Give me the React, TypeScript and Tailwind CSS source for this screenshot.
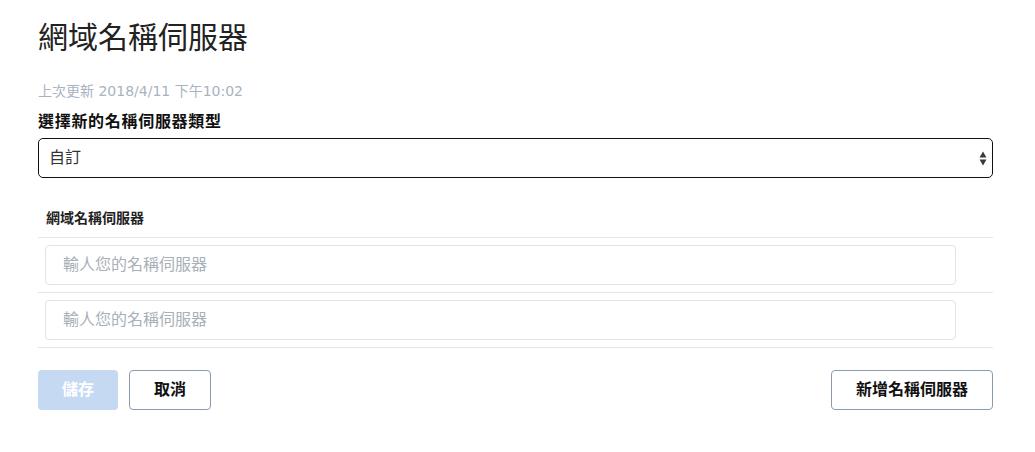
import React from "react";

const font = { fontFamily: '"Liberation Sans", "Noto Sans CJK TC", sans-serif' };
const subFont = { fontFamily: '"DejaVu Sans", "Noto Sans CJK TC", sans-serif' };

export default function App() {
  return (
    <div className="w-[1035px] h-[452px] bg-white text-[#1a1a1a]" style={font}>
      <div className="pl-[38px] pr-[42px] pt-[18px]">
        <h1 className="text-[30px] leading-[40px] font-normal text-[#222]">網域名稱伺服器</h1>
        <div className="mt-[23px] text-[14px] leading-[20px] text-[#a9b3bf]" style={subFont}>
          上次更新 2018/4/11 下午10:02
        </div>
        <div className="mt-[10px] text-[16px] leading-[22px] font-bold text-[#111] tracking-[0.7px]">選擇新的名稱伺服器類型</div>
        <div className="mt-[5px] relative h-[40px] border border-[#111] rounded-[5px] flex items-center pl-[10px] text-[16px] text-[#333]">
          <span>自訂</span>
          <svg className="absolute right-[5px] top-[12px]" width="8" height="15" viewBox="0 0 8 15">
            <path d="M4 0.5 L7.5 6.5 L0.5 6.5 Z" fill="#3a3a3a" />
            <path d="M4 14.5 L7.5 8.5 L0.5 8.5 Z" fill="#3a3a3a" />
          </svg>
        </div>
        <div className="mt-[30px] pl-[8px] text-[14px] leading-[20px] font-bold text-[#222]">網域名稱伺服器</div>
        <div className="mt-[9px] border-t border-[#e6e6e6]">
          {[0, 1].map((i) => (
            <div key={i} className="border-b border-[#e6e6e6] py-[7px] pl-[7px] pr-[37px]">
              <div className="h-[40px] border border-[#e3e3e3] rounded-[4px] flex items-center pl-[17px] text-[16px] text-[#a8b0b8]">
                輸人您的名稱伺服器
              </div>
            </div>
          ))}
        </div>
        <div className="mt-[22px] flex items-center">
          <button className="h-[40px] w-[80px] rounded-[4px] bg-[#c5daf2] text-white text-[16px] font-bold">儲存</button>
          <button className="ml-[11px] h-[40px] w-[82px] rounded-[4px] border border-[#8c9cae] bg-white text-[#111] text-[16px] font-bold">取消</button>
          <div className="flex-1" />
          <button className="h-[40px] w-[162px] rounded-[4px] border border-[#8c9cae] bg-white text-[#111] text-[16px] font-bold">新增名稱伺服器</button>
        </div>
      </div>
    </div>
  );
}
